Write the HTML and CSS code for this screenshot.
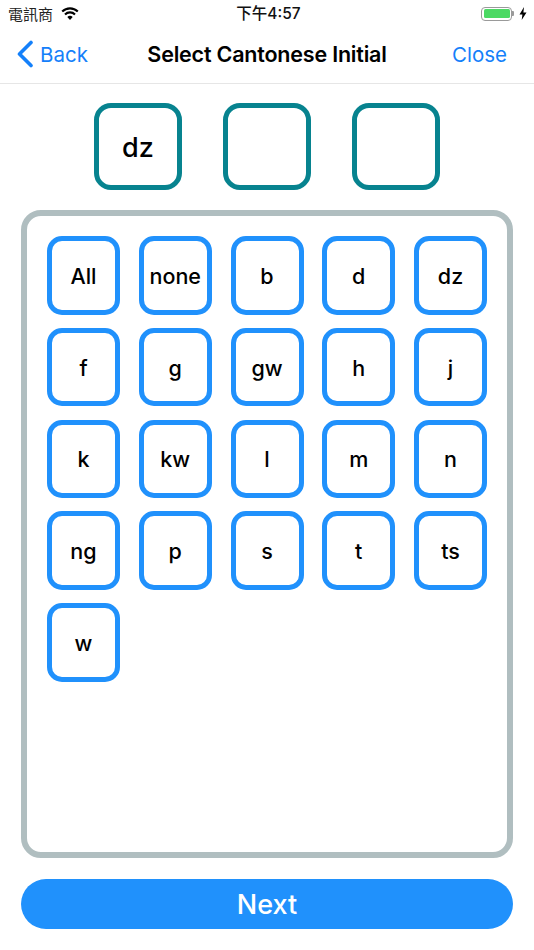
FILE: index.html
```html
<!DOCTYPE html>
<html lang="zh-Hant">
<head>
<meta charset="utf-8">
<title>Select Cantonese Initial</title>
<link rel="stylesheet" href="styles.css">
</head>
<body>
<div class="app">
  <div class="status">
    <div class="status-left">
      <span class="carrier">電訊商</span>
      <svg class="wifi" viewBox="0 0 18 13" width="18" height="13"><path d="M9 13 6.3 10a3.8 3.8 0 0 1 5.4 0Z" fill="#000"/><path d="M1.2 4.6a11 11 0 0 1 15.6 0" fill="none" stroke="#000" stroke-width="2.1"/><path d="M4 7.5a7 7 0 0 1 10 0" fill="none" stroke="#000" stroke-width="2.1"/></svg>
    </div>
    <div class="clock">下午4:57</div>
    <div class="status-right">
      <span class="battery"><span class="battery-fill"></span></span><span class="battery-cap"></span>
      <svg class="bolt" viewBox="0 0 8 13" width="8" height="13"><path d="M5 0 .5 7.4h2.9L2.7 13l4.8-7.6H4.4Z" fill="#000"/></svg>
    </div>
  </div>
  <nav class="nav">
    <a class="nav-back">
      <svg class="chevron" viewBox="0 0 18 28" width="18" height="28"><path d="M15 2.5 3.5 14 15 25.500" fill="none" stroke="#1480fa" stroke-width="3.600" stroke-linecap="round" stroke-linejoin="round"/></svg>
      <span>Back</span>
    </a>
    <div class="nav-title">Select Cantonese Initial</div>
    <a class="nav-close">Close</a>
  </nav>
  <div class="slots">
    <div class="slot">dz</div>
    <div class="slot"></div>
    <div class="slot"></div>
  </div>
  <div class="panel">
    <div class="keys">
      <div class="key">All</div><div class="key">none</div><div class="key">b</div><div class="key">d</div><div class="key">dz</div>
      <div class="key">f</div><div class="key">g</div><div class="key">gw</div><div class="key">h</div><div class="key">j</div>
      <div class="key">k</div><div class="key">kw</div><div class="key">l</div><div class="key">m</div><div class="key">n</div>
      <div class="key">ng</div><div class="key">p</div><div class="key">s</div><div class="key">t</div><div class="key">ts</div>
      <div class="key">w</div>
    </div>
  </div>
  <div class="next">Next</div>
</div>
</body>
</html>
```
FILE: styles.css
```css
* { box-sizing: border-box; }
html, body { margin: 0; padding: 0; background: #fff; }
body { font-family: Inter, "Noto Sans CJK TC", sans-serif; color: #000; }
.app { width: 534px; height: 950px; display: flex; flex-direction: column; overflow: hidden; }

.status { height: 27px; flex: none; display: grid; grid-template-columns: 1fr auto 1fr; align-items: center; padding: 0 7px 0 8px; }
.status-left { display: flex; align-items: center; gap: 8px; }
.carrier { font-family: "Noto Sans CJK TC", sans-serif; font-size: 15px; line-height: 20px; color: #222; }
.wifi { display: block; margin-top: -1px; }
.clock { font-size: 15.500px; line-height: 20px; font-weight: 500; color: #111; padding-left: 2px; }
.status-right { display: flex; align-items: center; justify-content: flex-end; }
.battery { width: 31px; height: 14px; border: 1.500px solid #9a9a9a; border-radius: 4px; padding: 1.500px; display: block; }
.battery-fill { display: block; height: 100%; background: #4cd964; border-radius: 1.500px; }
.battery-cap { width: 2px; height: 5px; background: #9a9a9a; border-radius: 0 1px 1px 0; }
.bolt { margin-left: 5px; }

.nav { height: 57px; flex: none; display: grid; grid-template-columns: 1fr auto 1fr; align-items: center; border-bottom: 1.500px solid #e6e6e6; padding: 0 16px 2px; }
.nav-back { display: flex; align-items: center; gap: 6px; color: #1480fa; font-size: 20.500px; }
.chevron { display: block; }
.nav-title { font-size: 21.500px; font-weight: 600; letter-spacing: -0.2px; }
.nav-close { color: #1480fa; font-size: 20.500px; justify-self: end; margin-right: 11px; }

.slots { flex: none; display: flex; justify-content: center; gap: 41.500px; margin-top: 19px; }
.slot { width: 87.500px; height: 87px; border: 5px solid #07838f; border-radius: 17px; display: flex; align-items: center; justify-content: center; font-size: 27px; font-weight: 500; padding-top: 1px; }

.panel { flex: none; margin: 20px 21px 0; height: 648px; border: 6px solid #b0bec0; border-radius: 20px; padding: 20px; }
.keys { display: grid; grid-template-columns: repeat(5, 73px); grid-auto-rows: 78.500px; column-gap: 18.750px; row-gap: 13.250px; }
.key { border: 5px solid #2091fc; border-radius: 15px; display: flex; align-items: center; justify-content: center; font-size: 21.500px; font-weight: 500; padding-top: 1px; }

.next { flex: none; margin: 21px 21px 0; height: 50px; border-radius: 25px; background: #2091fc; color: #fff; display: flex; align-items: center; justify-content: center; font-size: 27px; font-weight: 500; }
```
